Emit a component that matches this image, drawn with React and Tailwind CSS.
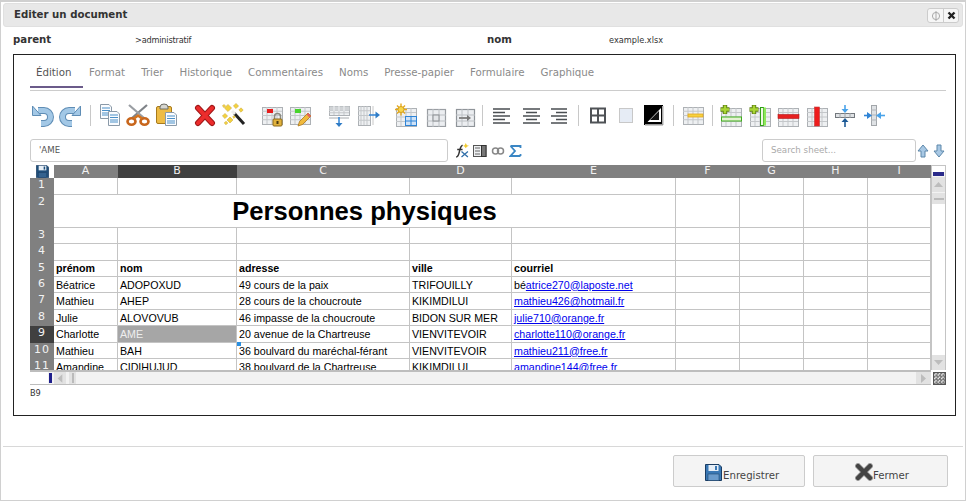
import React from "react";

const S = ({ children, w = 24, h = 24, vb, className = "" }) => (
  <svg width={w} height={h} viewBox={vb || `0 0 ${w} ${h}`} className={"shrink-0 " + className}>{children}</svg>
);

const Base = ({ x = 2, y = 4, w = 20, h = 17, top }) => {
  const xs = [1, 2, 3].map((i) => x + (w * i) / 4);
  const ys = [1, 2, 3].map((i) => y + (h * i) / 4);
  return (
    <g>
      <rect x={x + 0.5} y={y + 0.5} width={w} height={h} fill="#eef0f2" stroke="#adb1b5" />
      {top && <rect x={x + 1} y={y + 1} width={w - 1} height={h / 4} fill="#cfd2d5" />}
      {xs.map((v) => <line key={v} x1={v} x2={v} y1={y} y2={y + h} stroke="#c4c7ca" />)}
      {ys.map((v) => <line key={v} y1={v} y2={v} x1={x} x2={x + w} stroke="#c4c7ca" />)}
    </g>
  );
};

const Undo = () => (
  <g>
    <path d="M8 7.5 H14 A6.5 6.5 0 0 1 14 20.5 H11" fill="none" stroke="#5f8db5" strokeWidth="7" />
    <path d="M8 7.5 H14 A6.5 6.5 0 0 1 14 20.5 H11" fill="none" stroke="#a3c8e6" strokeWidth="5" />
    <path d="M2.5 3 V12.5 H11 Z" fill="#a3c8e6" stroke="#5f8db5" strokeLinejoin="round" />
  </g>
);

const Doc = ({ x, y, w = 11, h = 14 }) => (
  <g>
    <path d={`M${x + 0.5} ${y + 0.5} H${x + w - 3} L${x + w - 0.5} ${y + 3} V${y + h - 0.5} H${x + 0.5} Z`} fill="#fafcff" stroke="#8b9aa8" />
    {[4, 6.5, 9, 11].map((d) => (
      <line key={d} x1={x + 2} x2={x + w - 2} y1={y + d} y2={y + d} stroke="#4a90c8" />
    ))}
  </g>
);

const Lock = () => (
  <g>
    <path d="M14.5 16 V13.5 A3 3 0 0 1 20.5 13.5 V16" fill="none" stroke="#8a8a80" strokeWidth="1.5" />
    <rect x="13" y="16" width="9" height="7" rx="1" fill="#e1b23c" stroke="#8c6a1c" />
    <rect x="16.5" y="18" width="2" height="3" fill="#4d3b10" />
  </g>
);

const Arrow = ({ d, c = "#3d8ad6", w = 1.6 }) => <path d={d} fill="none" stroke={c} strokeWidth={w} />;

const icons = {
  undo: <S><Undo /></S>,
  redo: <S><g transform="matrix(-1 0 0 1 24 0)"><Undo /></g></S>,
  copy: (
    <S>
      <Doc x={2} y={1} w={12} h={15} />
      <Doc x={10} y={8} w={12} h={15} />
    </S>
  ),
  cut: (
    <S>
      <path d="M6 15 L21 2" stroke="#7f8388" strokeWidth="2.2" />
      <path d="M18 15 L3 2" stroke="#9a9ea3" strokeWidth="2.2" />
      <ellipse cx="5.5" cy="18.5" rx="4" ry="3.2" fill="#fff" stroke="#c8661c" strokeWidth="2.6" />
      <ellipse cx="18.5" cy="18.5" rx="4" ry="3.2" fill="#fff" stroke="#c8661c" strokeWidth="2.6" />
      <path d="M8 15.5 L12 12.5 L16 15.5" fill="none" stroke="#d2731f" strokeWidth="2.6" />
    </S>
  ),
  paste: (
    <S>
      <rect x="2.5" y="3.5" width="15" height="17" rx="1.5" fill="#eebc45" stroke="#a87a1c" />
      <path d="M6 4 A4 3 0 0 1 14 4 V6 H6 Z" fill="#d6d6d0" stroke="#6e6e66" />
      <Doc x={11} y={9} w={12} h={14} />
    </S>
  ),
  del: (
    <S>
      <path d="M5 5 L19 20 M19 5 L5 20" stroke="#a01818" strokeWidth="6" strokeLinecap="round" />
      <path d="M5 5 L19 20 M19 5 L5 20" stroke="#ec2c2c" strokeWidth="4" strokeLinecap="round" />
    </S>
  ),
  wand: (
    <S>
      <path d="M12 10 L22 21" stroke="#222" strokeWidth="3" />
      <path d="M10 8 L13 11" stroke="#eee" strokeWidth="3" />
      {[[6, 5, 3.6], [3, 13, 2.6], [8, 17, 3], [14, 3, 2.6], [19, 7, 2.2], [2, 3, 1.6], [4, 20, 1.8], [12, 14, 1.4]].map(([x, y, r]) => (
        <path key={x + "-" + y} d={`M${x - r} ${y} L${x} ${y - r} L${x + r} ${y} L${x} ${y + r} Z`} fill="#f3d23e" stroke="#c6a23a" strokeWidth="0.5" />
      ))}
    </S>
  ),
  lock: (
    <S>
      <Base />
      <rect x="7" y="6" width="6" height="4" fill="#e61c1c" />
      <Lock />
    </S>
  ),
  pencil: (
    <S>
      <Base />
      <rect x="7" y="6" width="6" height="4" fill="#48d42c" />
      <path d="M10 23 L11.5 18.5 L20 10 L23 13 L14.5 21.5 Z" fill="#f0b93c" stroke="#a9761e" strokeWidth="0.8" />
      <path d="M20 10 L23 13 L21.5 14.5 L18.5 11.5 Z" fill="#e45f5f" />
    </S>
  ),
  insDown: (
    <S>
      <Base y={3} h={9} />
      <rect x="2.5" y="3.5" width="20" height="4" fill="#d0d3d6" />
      <path d="M7 3 V8 M12 3 V8 M17 3 V8" stroke="#eef0f2" />
      <line x1="2" x2="22" y1="15" y2="15" stroke="#a8acb0" />
      <Arrow d="M12 14 V22" />
      <path d="M8.5 20 H15.5 L12 24 Z" fill="#2f7cc6" />
    </S>
  ),
  insRight: (
    <S>
      <Base x={2} w={12} y={3} h={19} />
      <line x1="17" x2="17" y1="3" y2="22" stroke="#c8c8c8" />
      <Arrow d="M13 12 H21" />
      <path d="M19.5 8.5 V15.5 L24 12 Z" fill="#2f7cc6" />
    </S>
  ),
  newSheet: (
    <S>
      <Base y={5} h={18} />
      <rect x="11.5" y="13.5" width="11" height="9" fill="#cfe2f7" stroke="#2f84d6" />
      <path d="M17 13 V23 M11 18 H23" stroke="#2f84d6" />
      <g stroke="#e6a81c" strokeWidth="1.4">
        <path d="M7 0.5 V12.5 M1 6.5 H13 M3 2.5 L11 10.5 M11 2.5 L3 10.5" />
      </g>
      <circle cx="7" cy="6.5" r="3" fill="#f7d64a" stroke="#d9a21c" />
    </S>
  ),
  merge: (
    <S>
      <rect x="3.5" y="6.5" width="18" height="17" fill="#eceef1" stroke="#9a9ea3" strokeWidth="1.2" />
      <path d="M3 12 H22 M3 18 H22 M9 6 V24 M15 6 V24" stroke="#bcc0c4" />
      <rect x="9" y="12" width="6" height="6" fill="#e3e5e8" stroke="#8a8e92" />
    </S>
  ),
  unmerge: (
    <S>
      <rect x="3.5" y="6.5" width="18" height="17" fill="#eceef1" stroke="#8f9499" strokeWidth="1.2" />
      <path d="M3 12 H22 M3 18 H22 M9 6 V24 M15 6 V24" stroke="#bcc0c4" />
      <path d="M6 15 H16" stroke="#888" strokeWidth="2" />
      <path d="M14 12 L18 15 L14 18 Z" fill="#777" />
    </S>
  ),
  left: (
    <S>
      <path d="M4 6 H21 M4 9.5 H16 M4 13 H21 M4 16.5 H16 M4 20 H21" stroke="#4a4e52" strokeWidth="1.4" />
    </S>
  ),
  center: (
    <S>
      <path d="M4 6 H21 M7 9.5 H18 M4 13 H21 M7 16.5 H18 M4 20 H21" stroke="#4a4e52" strokeWidth="1.4" />
    </S>
  ),
  right: (
    <S>
      <path d="M4 6 H20 M9 9.5 H20 M4 13 H20 M9 16.5 H20 M4 20 H20" stroke="#4a4e52" strokeWidth="1.4" />
    </S>
  ),
  borders: (
    <S>
      <rect x="5" y="5.5" width="14" height="14" fill="#fff" stroke="#4f5256" strokeWidth="2" />
      <path d="M12 5.5 V19.5 M5 12.5 H19" stroke="#4f5256" strokeWidth="2" />
    </S>
  ),
  blank: (
    <S>
      <rect x="5.5" y="5.5" width="13" height="14" fill="#e6ecf5" stroke="#c8c8c8" />
    </S>
  ),
  contrast: (
    <S>
      <rect x="2" y="2" width="19" height="20" fill="#000" />
      <rect x="20" y="3" width="1.5" height="19" fill="#aaa" />
      <rect x="3" y="21" width="18" height="1.5" fill="#999" />
      <path d="M5.5 19 L19 5 V19 Z" fill="#fff" />
      <path d="M8 17 L17 17 V8 Z" fill="#111" />
    </S>
  ),
  yellow: (
    <S>
      <Base y={4} h={17} />
      <rect x="7" y="11" width="15" height="3" fill="#f7d23e" stroke="#e0a622" strokeWidth="0.8" />
    </S>
  ),
  addRow: (
    <S>
      <Base y={5} h={18} />
      <rect x="2.5" y="14" width="20" height="4" fill="#e4f2d2" stroke="#3fae1c" />
      <path d="M6 2 V11 M1.5 6.5 H10.5" stroke="#5c7d12" strokeWidth="4.4" />
      <path d="M6 2.5 V10.5 M2 6.5 H10" stroke="#a9d635" strokeWidth="2.6" />
    </S>
  ),
  addCol: (
    <S>
      <Base y={5} h={18} />
      <rect x="12.5" y="4.5" width="3" height="18" fill="#f0f7e4" stroke="#2e9e16" />
      <rect x="15.5" y="4.5" width="2.5" height="18" fill="#8ee85a" />
      <path d="M6 2 V11 M1.5 6.5 H10.5" stroke="#5c7d12" strokeWidth="4.4" />
      <path d="M6 2.5 V10.5 M2 6.5 H10" stroke="#a9d635" strokeWidth="2.6" />
    </S>
  ),
  delRow: (
    <S>
      <Base y={5} h={18} />
      <rect x="2" y="11.5" width="21" height="4" fill="#e62020" stroke="#b41818" strokeWidth="0.6" />
    </S>
  ),
  delCol: (
    <S>
      <Base y={5} h={18} />
      <rect x="9.5" y="4" width="5" height="19" fill="#ee1c1c" stroke="#c43a3a" strokeWidth="0.6" />
    </S>
  ),
  splitV: (
    <S>
      <rect x="2.5" y="10.5" width="19" height="4" fill="#dfe2e5" stroke="#73787d" />
      <path d="M7 10 V15 M12 10 V15 M17 10 V15" stroke="#a0a4a8" />
      <path d="M12 2 V9" stroke="#49a3ea" strokeWidth="1.6" />
      <path d="M8.5 6 H15.5 L12 10 Z" fill="#49a3ea" />
      <path d="M12 16 V24" stroke="#1d5a96" strokeWidth="1.6" />
      <path d="M8.5 19 H15.5 L12 15 Z" fill="#1d5a96" />
    </S>
  ),
  splitH: (
    <S>
      <rect x="9.5" y="2.5" width="5" height="20" fill="#dfe2e5" stroke="#a2a6aa" />
      <path d="M9 7 H15 M9 12 H15 M9 17 H15" stroke="#b0b4b8" />
      <path d="M2 12.5 H8" stroke="#2f84d6" strokeWidth="1.6" />
      <path d="M5 9 V16 L10 12.5 Z" fill="#2f84d6" />
      <path d="M16 12.5 H23" stroke="#49a3ea" strokeWidth="1.6" />
      <path d="M19 9 V16 L14 12.5 Z" fill="#49a3ea" />
    </S>
  ),
};

const tools = [
  ["undo", ""], ["redo", "ml-[5px]"], ["|", "ml-[7px]"], ["copy", "ml-[7px]"], ["cut", "ml-[4px]"], ["paste", "ml-[4px]"],
  ["del", "ml-[15px]"], ["wand", "ml-[5px]"], ["lock", "ml-[14px]"], ["pencil", "ml-[4px]"], ["insDown", "ml-[15px]"], ["insRight", "ml-[5px]"],
  ["newSheet", "ml-[14px]"], ["merge", "ml-[6px]"], ["unmerge", "ml-[5px]"], ["|", "ml-[5px]"], ["left", "ml-[6px]"], ["center", "ml-[6px]"], ["right", "ml-[4px]"],
  ["|", "ml-[7px]"], ["borders", "ml-[7px]"], ["blank", "ml-[4px]"], ["contrast", "ml-[4px]"], ["|", "ml-[7px]"], ["yellow", "ml-[7px]"], ["|", "ml-[7px]"],
  ["addRow", "ml-[6px]"], ["addCol", "ml-[5px]"], ["delRow", "ml-[4px]"], ["delCol", "ml-[5px]"], ["splitV", "ml-[4px]"], ["splitH", "ml-[5px]"],
];

const tabs = ["Format", "Trier", "Historique", "Commentaires", "Noms", "Presse-papier", "Formulaire", "Graphique"];
const cols = ["A", "B", "C", "D", "E", "F", "G", "H", "I"];

const people = [
  ["Béatrice", "ADOPOXUD", "49 cours de la paix", "TRIFOUILLY", "atrice270@laposte.net", "bé"],
  ["Mathieu", "AHEP", "28 cours de la choucroute", "KIKIMDILUI", "mathieu426@hotmail.fr"],
  ["Julie", "ALOVOVUB", "46 impasse de la choucroute", "BIDON SUR MER", "julie710@orange.fr"],
  ["Charlotte", "AME", "20 avenue de la Chartreuse", "VIENVITEVOIR", "charlotte110@orange.fr"],
  ["Mathieu", "BAH", "36 boulvard du maréchal-férant", "VIENVITEVOIR", "mathieu211@free.fr"],
  ["Amandine", "CIDIHUJUD", "38 boulvard de la Chartreuse", "KIKIMDILUI", "amandine144@free.fr"],
];

const cellCls = "border-r border-b border-[#c4c4c4] bg-white flex items-center pl-[2px] overflow-hidden whitespace-nowrap text-[10.67px] text-black font-['Liberation_Sans',sans-serif]";
const hdrCls = "bg-[#808080] text-[#f2f2f2] flex items-center justify-center pr-px text-[11px] font-['DejaVu_Sans',sans-serif]";

const RowHead = ({ n, on }) => (
  <div className={(on ? "bg-[#404040] " : "bg-[#808080] ") + "text-[#f2f2f2] flex items-start justify-center text-[11px] leading-[13px] font-['DejaVu_Sans',sans-serif] tracking-[1px]"}>{n}</div>
);

const EmptyCell = () => <div className={cellCls} />;

const Floppy = ({ size = 17, dark }) => (
  <svg width={size} height={size} viewBox="0 0 17 17" className="shrink-0">
    <path d="M0.5 0.5 H14 L16.5 3 V16.5 H0.5 Z" fill={dark ? "#1f4e7a" : "#3a78b5"} stroke="#1a3c62" />
    <rect x="3.5" y="1" width="10" height="6" fill="#e6eef6" />
    <rect x="10" y="2" width="2" height="4" fill={dark ? "#1f4e7a" : "#3a78b5"} />
    <rect x="3" y="10" width="11" height="6.5" fill={dark ? "#34628f" : "#6a9bcc"} stroke="#1a3c62" strokeWidth="0.5" />
  </svg>
);

const ScrollArrow = ({ dir }) => {
  const d = { up: "M2 9 L6.5 4 L11 9 Z", down: "M2 4 L6.5 9 L11 4 Z", left: "M9 2 L4 6.5 L9 11 Z", right: "M4 2 L9 6.5 L4 11 Z" }[dir];
  return (
    <svg width="13" height="13" viewBox="0 0 13 13"><path d={d} fill="#bdbdbd" /></svg>
  );
};

export default function App() {
  return (
    <div className="w-[966px] h-[501px] bg-white border border-t-2 border-[#d0d0d0] box-border overflow-hidden font-['DejaVu_Sans',sans-serif]">
      <div className="mx-[2px] mt-px h-[24px] bg-[#e8e8e8] rounded-[3px] border border-[#e0e0e0] flex items-center justify-between pl-[10px] pr-[3px]">
        <span className="text-[10.2px] font-bold text-[#333]">Editer un document</span>
        <div className="flex h-[15px] mt-px border border-[#ccc] rounded-[3px] bg-[#f6f6f6]">
          <div className="w-[16px] flex items-center justify-center border-r border-[#ccc]">
            <svg width="10" height="10" viewBox="0 0 10 10">
              <circle cx="5" cy="5" r="3.6" fill="none" stroke="#aaa" strokeWidth="1" />
              <path d="M5 0 V10" stroke="#aaa" strokeWidth="1" />
            </svg>
          </div>
          <div className="w-[14px] flex items-center justify-center">
            <svg width="9" height="9" viewBox="0 0 9 9">
              <path d="M1.5 1.5 L7.5 7.5 M7.5 1.5 L1.5 7.5" stroke="#222" strokeWidth="2.4" />
            </svg>
          </div>
        </div>
      </div>

      <div className="h-[27px] pl-[12px] flex items-center text-[#333] pb-[1px]">
        <div className="w-[123px] text-[10.2px] font-bold">parent</div>
        <div className="w-[351px] -ml-px mr-px text-[8.2px] tracking-[-0.2px]">&gt;administratif</div>
        <div className="w-[122px] text-[10.2px] font-bold">nom</div>
        <div className="text-[8.2px]">example.xlsx</div>
      </div>

      <div className="ml-[12px] w-[943px] h-[362px] border border-[#222] pl-[16px] box-border">
        <div className="w-[916px] h-[36px] border-b border-[#ccc] box-border">
          <div className="flex h-[33px] text-[10.25px] text-[#8a8a8a]">
            <div className="w-[53px] pl-[6px] pt-[4px] border-b-2 border-[#6b5b8a] text-[#555] flex items-center box-border">Édition</div>
            <div className="flex items-center gap-[16px] ml-[6px] pt-[2px]">
              {tabs.map((t) => <span key={t}>{t}</span>)}
            </div>
          </div>
        </div>

        <div className="mt-[12px] h-[24px] flex items-center">
          {tools.map(([name, cls], i) => (
            name === "|" ? (
              <div key={i} className={"w-px h-[21px] bg-[#c8c8c8] " + cls} />
            ) : (
              <div key={i} className={"w-[24px] h-[24px] " + cls}>{icons[name]}</div>
            )
          ))}
        </div>

        <div className="mt-[12px] h-[23px] flex items-center">
          <div className="w-[418px] h-[23px] border border-[#ccc] rounded-[3px] flex items-center pl-[8px] text-[8.6px] text-[#555]">'AME</div>
          <div className="ml-[6px] flex items-center gap-[4px]">
            <svg width="15" height="15" viewBox="0 0 14 14">
              <path d="M2 13 C6 13 4 4 8 2 M3 6 H8" fill="none" stroke="#333" strokeWidth="1.4" />
              <path d="M7 8 L13 13 M13 8 L7 13" stroke="#2f6ea8" strokeWidth="1.2" />
              <path d="M11 0 L12 2 L14 2.5 L12 3.5 L11 5 L10 3.5 L8.5 2.5 L10 2 Z" fill="#f0c92e" />
            </svg>
            <svg width="14" height="14" viewBox="0 0 14 14">
              <rect x="0.5" y="1.5" width="12.5" height="11" fill="#eef0f2" stroke="#555" />
              <path d="M2 4 H7 M2 7 H7 M2 10 H7" stroke="#666" />
              <rect x="8.5" y="1.5" width="4.5" height="11" fill="#777" stroke="#333" />
            </svg>
            <svg width="14" height="14" viewBox="0 0 14 14">
              <circle cx="4.5" cy="7" r="3" fill="none" stroke="#888" strokeWidth="1.5" />
              <circle cx="9.5" cy="7" r="3" fill="none" stroke="#888" strokeWidth="1.5" />
            </svg>
            <svg width="13" height="14" viewBox="0 0 13 14">
              <path d="M1.5 2 H11.5 V4 M11.5 12 H1.5 L6 7 L1.5 2 M11.5 12 V10" fill="none" stroke="#3a86c4" strokeWidth="1.8" />
            </svg>
          </div>
          <div className="ml-[240px] w-[154px] h-[23px] border border-[#ccc] rounded-[3px] flex items-center pl-[8px] text-[8.7px] text-[#aaa]">Search sheet...</div>
          <div className="ml-[1px] flex items-center gap-[4px]">
            <svg width="12" height="14" viewBox="0 0 12 14"><path d="M6 1 L11 7 H8 V13 H4 V7 H1 Z" fill="#a8c8e4" stroke="#5c87aa" /></svg>
            <svg width="12" height="14" viewBox="0 0 12 14"><path d="M6 13 L11 7 H8 V1 H4 V7 H1 Z" fill="#a8c8e4" stroke="#5c87aa" /></svg>
          </div>
        </div>

        <div className="mt-[3px] w-[916px] flex h-[205px]">
          <div className="relative w-[901px] h-[205px] overflow-hidden grid grid-cols-[24px_64px_119px_173px_102px_164px_64px_64px_64px_63px] grid-rows-[13px_17px_33px_16px_17px_16px_16px_17px_16px_17px_16px_17px]">
            <div className="bg-white flex items-end justify-center"><Floppy size={13} dark /></div>
            {cols.map((c) => (
              <div key={c} className={(c === "B" ? "!bg-[#404040] " : "") + hdrCls}>{c}</div>
            ))}

            {[1].map((n) => (
              <React.Fragment key={n}>
                <RowHead n={n} />
                {cols.map((c) => <EmptyCell key={c} />)}
              </React.Fragment>
            ))}

            <RowHead n={2} />
            <div className="col-span-5 border-r border-b border-[#c4c4c4] flex items-center justify-center text-[25.6px] font-bold text-black font-['Liberation_Sans',sans-serif]">Personnes physiques</div>
            {cols.slice(5).map((c) => <EmptyCell key={c} />)}

            {[3, 4].map((n) => (
              <React.Fragment key={n}>
                <RowHead n={n} />
                {cols.map((c) => <EmptyCell key={c} />)}
              </React.Fragment>
            ))}

            <RowHead n={5} />
            {["prénom", "nom", "adresse", "ville", "courriel"].map((h) => (
              <div key={h} className={cellCls + " font-bold pb-px"}>{h}</div>
            ))}
            {cols.slice(5).map((c) => <EmptyCell key={c} />)}

            {people.map((p, i) => {
              const sel = i === 3;
              return (
                <React.Fragment key={i}>
                  <RowHead n={i + 6} on={sel} />
                  <div className={cellCls}>{p[0]}</div>
                  <div className={cellCls + (sel ? " !bg-[#a6a6a6] !text-[#eeeeee]" : "")}>{p[1]}</div>
                  <div className={cellCls}>{p[2]}</div>
                  <div className={cellCls}>{p[3]}</div>
                  <div className={cellCls}>
                    {p[5]}
                    <span className="text-[#0000ee] underline">{p[4]}</span>
                  </div>
                  {cols.slice(5).map((c) => <EmptyCell key={c} />)}
                </React.Fragment>
              );
            })}
            <div className="absolute left-[207px] top-[177px] w-[4px] h-[4px] bg-[#2a8fe0]" />
          </div>

          <div className="w-[15px] h-[205px] border-x border-[#c4c4c4] flex flex-col bg-[#f3f3f3] box-border">
            <div className="h-[7px] bg-white border-t border-[#c4c4c4]" />
            <div className="h-[4px] bg-[#2a2a8a] mx-px" />
            <div className="mt-px h-[15px] bg-[#e2e2e2] flex items-center justify-center"><ScrollArrow dir="up" /></div>
            <div className="mt-px h-[11px] bg-[#e2e2e2] flex items-center justify-center"><div className="w-[10px] h-[2px] bg-[#bbb]" /></div>
            <div className="flex-1 bg-white" />
            <div className="h-[15px] bg-[#e2e2e2] flex items-center justify-center"><ScrollArrow dir="down" /></div>
          </div>
        </div>

        <div className="flex w-[916px] h-[16px]">
          <div className="w-[901px] h-[15px] border-t-2 border-b-1 border-[#bdbdbd] flex items-stretch bg-[#f2f2f2] box-border">
            <div className="w-[18px] bg-white" />
            <div className="w-[3px] my-px bg-[#1e1e8c] ml-px" />
            <div className="ml-[2px] w-[12px] bg-[#e2e2e2] flex items-center justify-center"><ScrollArrow dir="left" /></div>
            <div className="ml-[3px] w-[7px] bg-[#e2e2e2] flex items-center justify-center"><div className="w-[2px] h-[10px] bg-[#bbb]" /></div>
            <div className="flex-1" />
            <div className="w-[15px] bg-[#e2e2e2] flex items-center justify-center"><ScrollArrow dir="right" /></div>
          </div>
          <svg width="13" height="13" viewBox="0 0 13 13" className="ml-[2px] mt-[2px]">
            <rect x="0.5" y="0.5" width="12" height="12" fill="#777" stroke="#555" />
            <path d="M3 1 V12 M6.5 1 V12 M10 1 V12 M1 3 H12 M1 6.5 H12 M1 10 H12" stroke="#e5e5e5" strokeWidth="1.4" strokeDasharray="1.5 2" />
          </svg>
        </div>

        <div className="mt-[1px] text-[8.2px] leading-[12px] text-[#333]">B9</div>
      </div>

      <div className="mx-[2px] mt-[30px] border-t border-[#d8d8d8]" />

      <div className="mt-[8px] flex">
        <div className="ml-[672px] w-[132px] h-[32px] bg-[#f4f4f4] border border-[#ccc] rounded-[2px] flex items-end pl-[31px] pb-[5px] text-[10.2px] text-[#444] box-border">
          <Floppy />
          <span className="leading-[13px] -mb-[1px] ml-px">Enregistrer</span>
        </div>
        <div className="ml-[8px] w-[135px] h-[32px] bg-[#f4f4f4] border border-[#ccc] rounded-[2px] flex items-end pl-[41px] pb-[5px] text-[10.2px] text-[#444] box-border">
          <svg width="18" height="18" viewBox="0 0 18 18" className="shrink-0">
            <path d="M3 3 L15 15 M15 3 L3 15" stroke="#aaa" strokeWidth="6" strokeLinecap="round" />
            <path d="M3 3 L15 15 M15 3 L3 15" stroke="#444" strokeWidth="4.4" strokeLinecap="round" />
          </svg>
          <span className="leading-[13px] -mb-[1px]">Fermer</span>
        </div>
      </div>
    </div>
  );
}
